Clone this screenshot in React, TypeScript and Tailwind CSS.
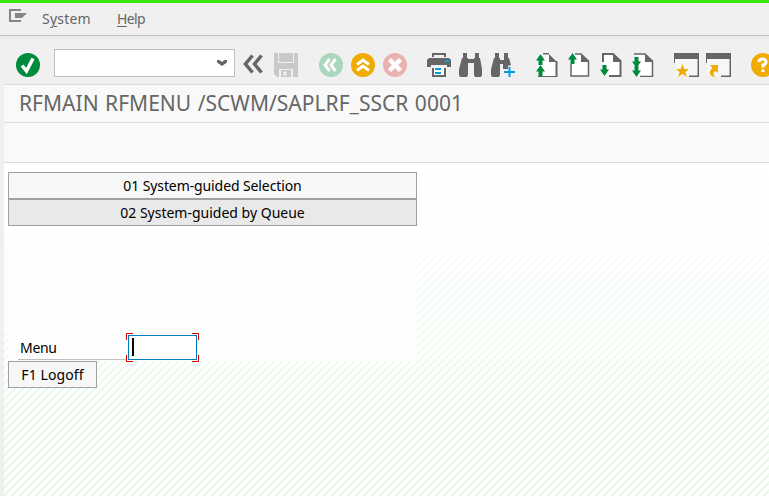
import React from "react";

const G = "#666666";
const GREEN = "#008a3b";
const BLUE = "#009de0";

function Icon({ w = 24, ml, children }: { w?: number; ml: string; children: React.ReactNode }) {
  return (
    <svg width={w} height={24} viewBox={`0 0 ${w} 24`} className={`shrink-0 ${ml}`}>
      {children}
    </svg>
  );
}

const up = "M4.500 0L9 6.500H6.500V11H2.500V6.500H0Z";
const down = "M4.500 11L9 4.500H6.500V0H2.500V4.500H0Z";

function Fold() {
  return <path d="M14 1L22 9H14Z" fill={G} />;
}

export default function App() {
  return (
    <div className="flex h-[496px] w-[769px] flex-col overflow-hidden bg-[#f0f0f0] font-['Noto_Sans',sans-serif] text-black">
      <div className="h-[3px] shrink-0 bg-[#38e60a]" />
      <div className="flex h-[33px] shrink-0 items-start border-b border-[#bfbfbf] text-[14px] leading-5 text-[#666]">
        <svg width="20" height="14" viewBox="0 0 20 14" className="mt-[6px] ml-[8px] shrink-0">
          <path d="M13 1H2V12H13" fill="none" stroke="#858585" strokeWidth="2" />
          <path d="M7 4H19L14 9H7Z" fill="#858585" />
        </svg>
        <span className="mt-[6px] ml-[14px] w-[75px] tracking-[0.2px]">S<u className="underline-offset-2">y</u>stem</span>
        <span className="mt-[6px] tracking-[-0.6px]"><u className="underline-offset-2">H</u>elp</span>
      </div>
      <div className="h-[3px] shrink-0 bg-[#eaeaea]" />
      <div className="flex h-[45px] shrink-0 items-start pt-[14px] pl-4">
        <Icon ml="">
          <circle cx="12" cy="12" r="12" fill={GREEN} />
          <path d="M6 12.500L10.500 18L17 5.500" fill="none" stroke="white" strokeWidth="3.500" />
        </Icon>
        <div className="-mt-[4px] ml-[14px] flex h-7 w-[181px] shrink-0 items-center justify-end border border-[#bfbfbf] bg-white pr-[6px]">
          <svg width="12" height="8" viewBox="0 0 12 8"><path d="M1 1H3.500L6 3L8.500 1H11V3.500L6 7L1 3.500Z" fill={G} /></svg>
        </div>
        <Icon ml="ml-[7px]">
          <path d="M10.500 2.500L3.500 11L10.500 19.500M19.500 2.500L12.500 11L19.500 19.500" fill="none" stroke={G} strokeWidth="3.500" />
        </Icon>
        <Icon ml="ml-2">
          <path d="M0 0H4V10H20V0H24V24H19V16H5V24H3L0 21ZM5 0H19V9H5ZM7 17H17V24H7Z" fill="#c9c9c9" />
          <path d="M10 19H12V22H10Z" fill="none" stroke="white" strokeWidth="1" />
        </Icon>
        <Icon ml="ml-[21px]">
          <circle cx="12" cy="12" r="12" fill="#a9d6bd" />
          <path d="M10.500 6L6 12L10.500 18M16.500 6L12 12L16.500 18" fill="none" stroke="white" strokeWidth="3" />
        </Icon>
        <Icon ml="ml-2">
          <circle cx="12" cy="12" r="12" fill="#f0ab00" />
          <path d="M6 11.500L12 7L18 11.500M6 17.500L12 13L18 17.500" fill="none" stroke="white" strokeWidth="3" />
        </Icon>
        <Icon ml="ml-2">
          <circle cx="12" cy="12" r="12" fill="#ebb2b2" />
          <path d="M6.500 6.500L17.500 17.500M17.500 6.500L6.500 17.500" stroke="white" strokeWidth="4.500" />
        </Icon>
        <Icon ml="ml-5">
          <path d="M6 4V1H18V4" fill="none" stroke={G} strokeWidth="2" />
          <path d="M2 5H22L24 7V14H20V12H4V14H0V7Z" fill={G} />
          <path d="M5 15H7V22H17V15H19V24H5Z" fill={G} />
          <path d="M7 14H17V22H7Z" fill="white" />
          <path d="M18 8H22M8 16H14M8 20H14" stroke={BLUE} strokeWidth="2" />
        </Icon>
        <Icon ml="ml-2">
          <path d="M4 0H8V5H9V6H15V5H16V0H20V5H21L23 16V22L22 24H16L15 22V10H9V22L8 24H1L0 22V16L3 5H4Z" fill={G} />
        </Icon>
        <Icon ml="ml-2">
          <path d="M4 0H8V5H9V7H13V5H13V0H17V5H18L20 12L17 13V16H12V11H9V22L8 24H1L0 22V16L3 5H4Z" fill={G} />
          <path d="M13 19H24M18.500 14V24" stroke={BLUE} strokeWidth="2" />
        </Icon>
        <Icon ml="ml-5">
          <path d="M5 0H14L22 8V24H3V5Z" fill="white" />
          <path d="M8 .5H14M21.500 8V24M3 24H22" stroke={G} strokeWidth="2" fill="none" />
          <Fold />
          <path d={up} transform="translate(1 1)" fill={GREEN} />
          <path d={up} transform="translate(1 12)" fill={GREEN} />
        </Icon>
        <Icon ml="ml-2">
          <path d="M3 1H14L21 8V23H3Z" fill="white" />
          <path d="M8 1H14L21.500 8V23H4V11" stroke={G} strokeWidth="1.500" fill="none" />
          <Fold />
          <path d={up} transform="translate(1 0)" fill={GREEN} />
        </Icon>
        <Icon ml="ml-2">
          <path d="M4 1H14L21 8V23H4Z" fill="white" />
          <path d="M4 9V1H14L21.500 8V23H10" stroke={G} strokeWidth="2" fill="none" />
          <Fold />
          <path d={down} transform="translate(1 12)" fill={GREEN} />
        </Icon>
        <Icon ml="ml-2">
          <path d="M5 1H14L21 8V23H5Z" fill="white" />
          <path d="M3 1H14L21.500 8V23.500H9" stroke={G} strokeWidth="1.500" fill="none" />
          <Fold />
          <path d={down} transform="translate(1 4)" fill={GREEN} />
          <path d={down} transform="translate(1 13)" fill={GREEN} />
        </Icon>
        <Icon ml="ml-[19px]" w={26}>
          <path d="M1 5H24V23H1Z" fill="#f7f7f7" />
          <path d="M0 0H25V24H15V22.500H23.500V6H1V10H0Z" fill={G} />
          <path d="M8.500 11L10.200 16H15L11.300 19L13 24L8.500 21L4 24L5.700 19L2 16H6.800Z" fill="#f0ab00" />
        </Icon>
        <Icon ml="ml-[6px]" w={26}>
          <path d="M1 5H24V23H1Z" fill="#f7f7f7" />
          <path d="M0 0H25V24H15V22.500H23.500V6H1V10H0Z" fill={G} />
          <path d="M4 12H12V20L9.500 18C7 19 7 21 9 24C3 23 2 19 6.500 15Z" fill="#f0ab00" />
        </Icon>
        <Icon ml="ml-[19px]">
          <circle cx="12" cy="12" r="12" fill="#f0ab00" />
          <path d="M8 9Q8 6 11.500 6Q15 6 15 9Q15 11 12 12V14.500M12 16.500V19" fill="none" stroke="white" strokeWidth="3" />
        </Icon>
      </div>
      <div className="ml-1 flex h-[39px] shrink-0 items-center border-y border-[#dcdcdc] bg-[#f9f9f9] pl-[15px]">
        <h1 className="-mt-px whitespace-nowrap text-[21px] leading-[36px] tracking-[0.02px] text-[#666] [word-spacing:1px]">RFMAIN RFMENU /SCWM/SAPLRF_SSCR 0001</h1>
      </div>
      <div className="ml-1 h-10 shrink-0 border-b border-[#dcdcdc] bg-[#f9f9f9]" />
      <main className="ml-1 min-h-0 flex-1 bg-[linear-gradient(to_bottom,#fff_0%,rgba(255,255,255,0.9)_15%,rgba(255,255,255,0)_85%),linear-gradient(135deg,#fff_0_12.5%,#ebf9eb_12.5%_37.5%,#fff_37.5%_62.5%,#ebf9eb_62.5%_87.5%,#fff_87.5%)] bg-[size:100%_100%,8px_8px] pt-[9px] pl-1 text-[14px]">
        <div className="h-[189px] w-[409px] bg-white/60">
          <button className="block h-[27px] w-full border border-[#a0a0a0] bg-[#f7f7f7] text-center leading-[25px] tracking-[-0.1px]">01 System-guided Selection</button>
          <button className="block h-[27px] w-full border border-[#a0a0a0] bg-[#e9e9e9] text-center leading-[25px]">02 System-guided by Queue</button>
          <div className="flex pt-[107px] pl-[10px]">
            <div className="h-[27px] w-[108px] border-b border-[#bfbfbf] pl-[2px] leading-[30px] tracking-[-0.3px]">Menu</div>
            <div className="relative h-[28px] w-[73px] p-[2px]">
              <div className="h-[25px] w-[69px] border border-[#007cc0] bg-white pt-[2px] pl-[3px]">
                <div className="h-[18px] w-[2px] bg-black" />
              </div>
              <svg className="absolute top-0 left-0" width="73" height="29" viewBox="0 0 73 29">
                <path d="M0.500 7V0.500H7M66 0.500H72.500V7M0.500 22V28.500H7M66 28.500H72.500V22" fill="none" stroke="#d90000" />
              </svg>
            </div>
          </div>
        </div>
        <button className="block h-[27px] w-[89px] border border-[#a0a0a0] bg-[#f7f7f7] text-center leading-[25px] tracking-[0.1px]">F1 Logoff</button>
      </main>
    </div>
  );
}
